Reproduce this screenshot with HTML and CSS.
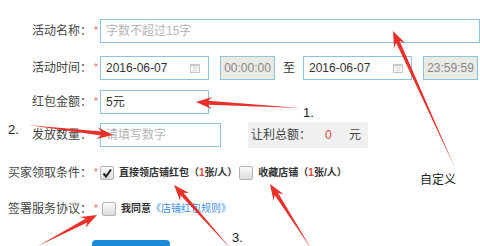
FILE: index.html
```html
<!DOCTYPE html>
<html lang="zh-CN">
<head>
  <meta charset="UTF-8">
  <title>红包活动</title>
  <link rel="stylesheet" href="styles.css">
</head>
<body>
  <div class="form">
    <div class="row">
      <span class="lbl">活动名称：</span><i class="req">*</i>
      <div class="ipt ipt-name"><span class="ph">字数不超过15字</span></div>
    </div>
    <div class="row row-time">
      <span class="lbl">活动时间：</span><i class="req">*</i>
      <div class="ipt ipt-date">2016-06-07
        <svg class="cal" width="10" height="10" viewBox="0 0 10 10"><rect x="0.5" y="1.5" width="9" height="8" fill="#fff" stroke="#c4c4c4"/><rect x="0.5" y="1.5" width="9" height="2" fill="#cfcfcf"/><path d="M2 5.5h6M2 7.5h6M4 4v5M6 4v5" stroke="#e2e2e2" stroke-width="1"/></svg>
      </div>
      <div class="ipt ipt-clock">00:00:00</div>
      <span class="to">至</span>
      <div class="ipt ipt-date">2016-06-07
        <svg class="cal" width="10" height="10" viewBox="0 0 10 10"><rect x="0.5" y="1.5" width="9" height="8" fill="#fff" stroke="#c4c4c4"/><rect x="0.5" y="1.5" width="9" height="2" fill="#cfcfcf"/><path d="M2 5.5h6M2 7.5h6M4 4v5M6 4v5" stroke="#e2e2e2" stroke-width="1"/></svg>
      </div>
      <div class="ipt ipt-clock">23:59:59</div>
    </div>
    <div class="row row-money">
      <span class="lbl">红包金额：</span><i class="req">*</i>
      <div class="ipt ipt-short">5元</div>
    </div>
    <div class="row row-count">
      <span class="lbl">发放数量：</span><i class="req">*</i>
      <div class="ipt ipt-count"><span class="ph">请填写数字</span></div>
      <div class="total">让利总额：<span class="zero">0</span>元</div>
    </div>
    <div class="row row-cond">
      <span class="lbl">买家领取条件：</span><i class="req">*</i>
      <span class="chk on">
        <svg width="12" height="12" viewBox="0 0 12 12"><path d="M2.5 6.5l2.5 3 5-7" fill="none" stroke="#222" stroke-width="2"/></svg>
      </span>
      <span class="opt">直接领店铺红包（<b>1</b>张/人）</span>
      <span class="chk"></span>
      <span class="opt">收藏店铺（<b>1</b>张/人）</span>
    </div>
    <div class="row row-sign">
      <span class="lbl">签署服务协议：</span><i class="req">*</i>
      <span class="chk chk-sign"></span>
      <span class="opt">我同意</span><a class="rule" href="javascript:;">《店铺红包规则》</a>
    </div>
    <div class="btn"></div>
  </div>

  <!-- 截图上的标注 -->
  <div class="notes">
    <span class="num num-1">1.</span>
    <span class="num num-2">2.</span>
    <span class="num num-3">3.</span>
    <span class="custom">自定义</span>
    <svg class="arrows" width="480" height="246" viewBox="0 0 480 246">
      <polygon points="455,168 399.7,41.1 405.1,43.1 393,31 394.1,48.1 396.1,42.7"/>
      <polygon points="300,108 208.1,100.7 212.3,96.9 196,102 211.6,108.9 207.9,104.7"/>
      <polygon points="28,125 100.9,135.6 96.4,139.1 113,135 97.8,127.2 101.3,131.6"/>
      <polygon points="232,250 183.5,192.7 189.2,192.9 174,185 180.2,200.9 180.5,195.3"/>
      <polygon points="312,250 278.1,193 283.7,194.3 270,184 273.5,200.7 274.8,195.2"/>
      <polygon points="38,246 87.3,222.4 85.6,227.7 97,215 80,217.1 85.5,218.8"/>
    </svg>
  </div>
</body>
</html>
```

FILE: styles.css
```css
* {
      box-sizing: border-box;
}

html,
body {
      margin: 0;
      padding: 0;
      overflow: hidden;
}

body {
      position: relative;
      width: 480px;
      height: 246px;
      background: #fff;
      color: #333;
      font: 12px/1.2 "Liberation Sans", "Noto Sans CJK SC", sans-serif;
}

.form {
      padding-top: 19px;
}

.row {
      display: flex;
      align-items: center;
      height: 24px;
}

.row-time {
      margin-top: 13px;
}

.row-money {
      margin-top: 10px;
}

.row-count {
      margin-top: 9px;
}

.row-cond {
      margin-top: 14px;
}

.row-sign {
      margin-top: 12px;
}

.lbl {
      width: 92px;
      text-align: right;
      color: #444;
}

.req {
      width: 8px;
      font-style: normal;
      font-size: 10px;
      color: #f26a6a;
      text-align: center;
}

.ipt {
      display: flex;
      align-items: center;
      height: 24px;
      padding-left: 5px;
      border: 1px solid #8cc3dd;
      background: #fff;
      color: #333;
}

.ph {
      color: #b4b4b4;
}

.ipt-name {
      width: 380px;
}

.ipt-date {
      width: 109px;
      justify-content: space-between;
      padding-right: 8px;
}

.ipt-clock {
      width: 55px;
      margin-left: 11px;
      padding-left: 0;
      justify-content: center;
      background: #ebebe6;
      color: #888;
}

.to {
      width: 28px;
      text-align: center;
}

.ipt-short {
      width: 109px;
}

.ipt-count {
      width: 121px;
}

.total {
      display: flex;
      align-items: center;
      width: 120px;
      height: 26px;
      margin-left: 27px;
      padding-left: 3px;
      background: #f0f0f0;
      color: #444;
}

.zero {
      width: 38px;
      padding-left: 14px;
      color: #e4473f;
}

.chk {
      display: flex;
      align-items: center;
      justify-content: center;
      width: 14px;
      height: 14px;
      border: 1px solid #b3b3b3;
      border-radius: 2px;
      background: linear-gradient(#fbfbfb, #dcdcdc);
}

.chk-sign {
      margin-left: 2px;
}

.opt {
      margin: 0 2px 0 5px;
      font-size: 10px;
      font-weight: bold;
      color: #333;
}

.opt b {
      color: #e4473f;
}

.rule {
      font-size: 10px;
      color: #3b8ee3;
      text-decoration: none;
      margin-left: -2px;
}

.btn {
      width: 78px;
      height: 6px;
      margin: 19px 0 0 92px;
      border-radius: 4px 4px 0 0;
      background: #1a8bd6;
}

.notes {
      position: absolute;
      left: 0;
      top: 0;
      width: 480px;
      height: 246px;
      pointer-events: none;
}

.num,
.custom {
      position: absolute;
      font-size: 13px;
      color: #222;
}

.num-1 {
      left: 303px;
      top: 105px;
}

.num-2 {
      left: 8px;
      top: 122px;
}

.num-3 {
      left: 232px;
      top: 230px;
}

.custom {
      left: 420px;
      top: 173px;
      font-size: 12px;
}

.arrows {
      position: absolute;
      left: 0;
      top: 0;
}

.arrows polygon {
      fill: #e8312b;
}
```
